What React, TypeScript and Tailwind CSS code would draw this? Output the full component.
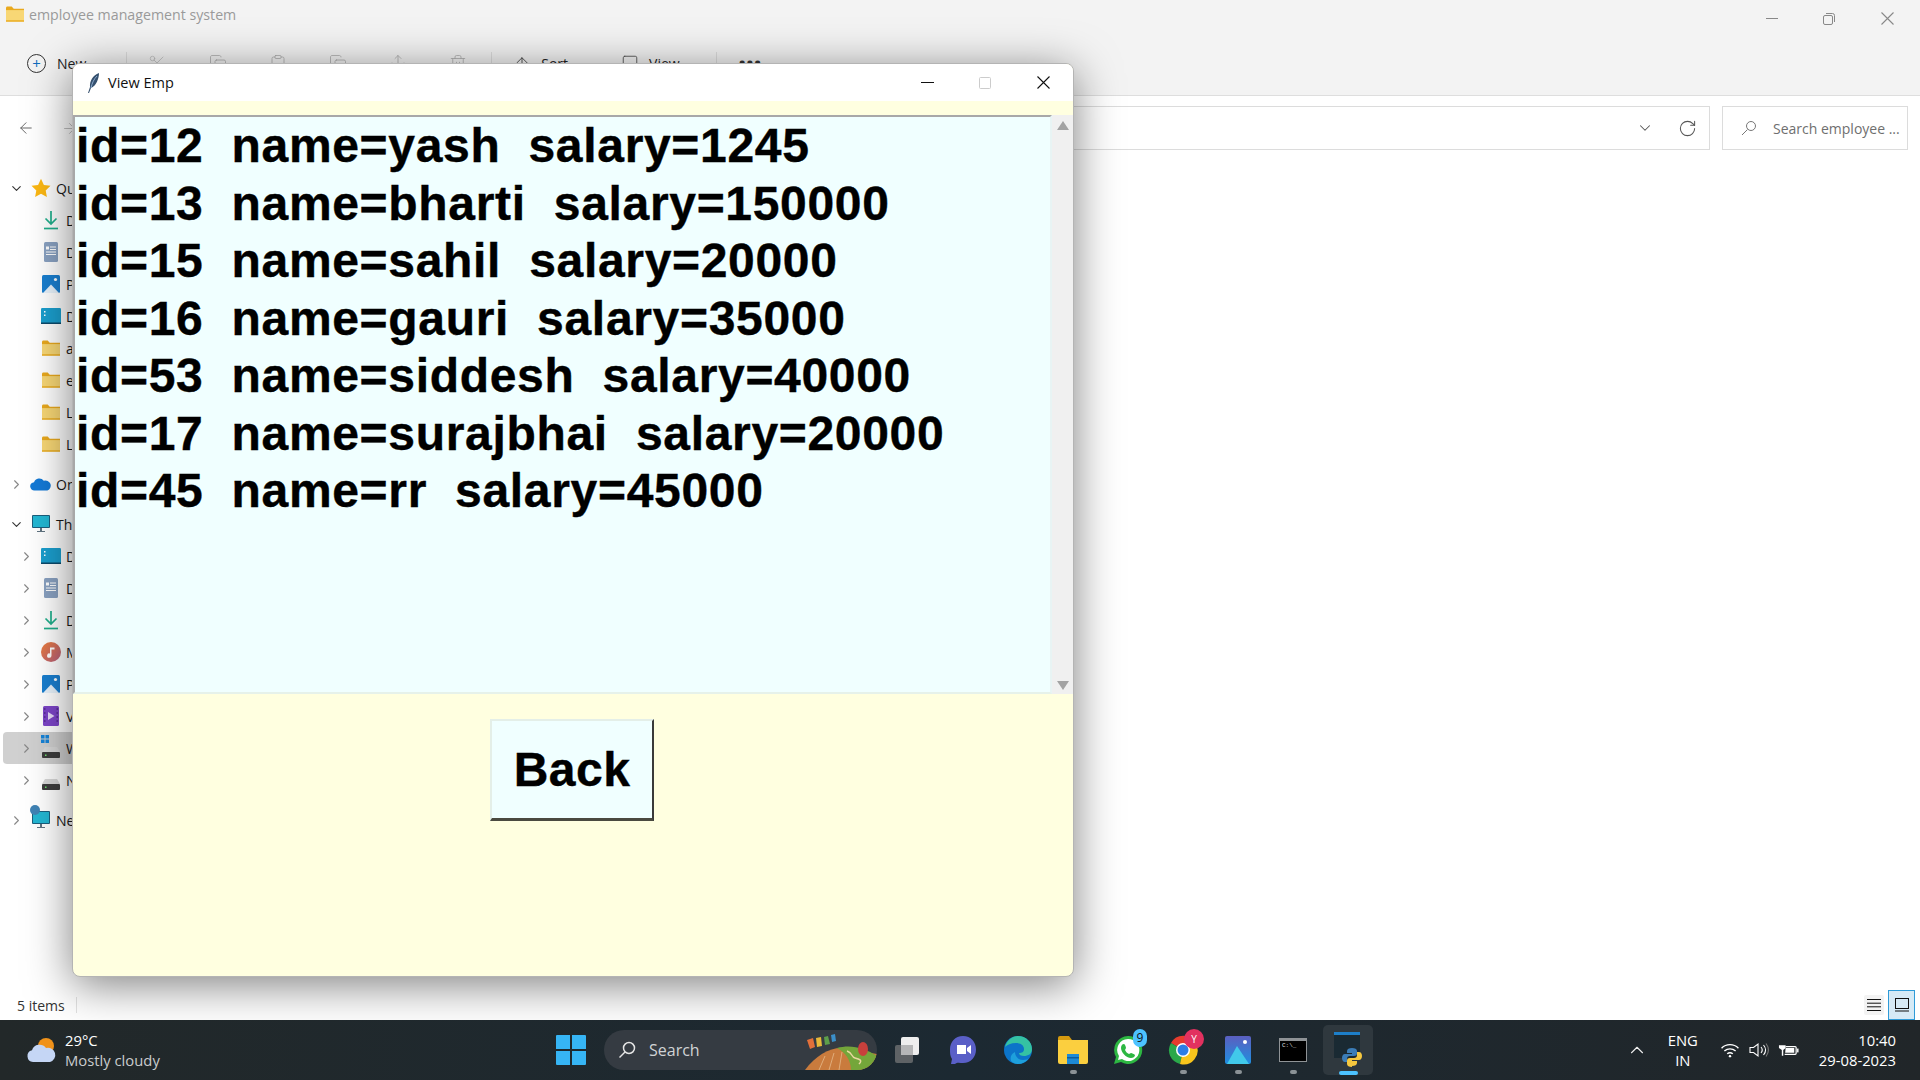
import {
  ArrowLeft,
  ArrowRight,
  ArrowUp,
  ChevronDown,
  ChevronRight,
  ChevronUp,
  Clipboard,
  Copy,
  RotateCw,
  Scissors,
  Share,
  Square,
  Trash2,
} from "lucide-react"
import type { ReactNode } from "react"

const segoe = "font-['Open_Sans','Noto_Sans',sans-serif]"

const employees = [
  "id=12  name=yash  salary=1245",
  "id=13  name=bharti  salary=150000",
  "id=15  name=sahil  salary=20000",
  "id=16  name=gauri  salary=35000",
  "id=53  name=siddesh  salary=40000",
  "id=17  name=surajbhai  salary=20000",
  "id=45  name=rr  salary=45000",
]

function CloseGlyph({ color }: { color: string }) {
  return (
    <svg viewBox="0 0 13 13" className="h-[13px] w-[13px] shrink-0" fill="none" stroke={color} strokeWidth="1.100">
      <path d="M.5.5l12 12M12.500.5l-12 12" />
    </svg>
  )
}

function FolderIcon({ className = "h-[16px] w-[18px]" }: { className?: string }) {
  return (
    <svg viewBox="0 0 18 15" className={className}>
      <path d="M0 1.500C0 .7.6 0 1.400 0h4.300l2 2.200H18V15H0z" fill="#e9a91e" />
      <path d="M0 3.600h18V15H0z" fill="#f8d775" />
      <path d="M0 13.800h18V15H0z" fill="#e9a91e" />
    </svg>
  )
}

function DownloadIcon() {
  return (
    <svg viewBox="0 0 16 20" className="h-[20px] w-[16px]">
      <path d="M8 1v13M2.500 8.500 8 14l5.500-5.500" fill="none" stroke="#1fae8b" strokeWidth="1.700" />
      <path d="M1 18.500h14" stroke="#1fae8b" strokeWidth="1.700" />
    </svg>
  )
}

function DocIcon() {
  return (
    <svg viewBox="0 0 14 20" className="h-[20px] w-[14px]">
      <rect width="14" height="20" rx="1.500" fill="#8aa2c2" />
      <path d="M6 5h6M6 7.500h6M2 10h10M2 12.500h10" stroke="#fff" strokeWidth="1.100" />
      <rect x="2" y="4.500" width="3" height="3" fill="#fff" />
    </svg>
  )
}

function PictureIcon() {
  return (
    <svg viewBox="0 0 18 18" className="h-[18px] w-[18px]">
      <rect width="18" height="18" rx="1.500" fill="#1a7fd0" />
      <path d="M1 18 9 9.500 17 18z" fill="#e8f3fc" />
      <circle cx="13.500" cy="4.500" r="1.600" fill="#fff" />
    </svg>
  )
}

function DesktopIcon() {
  return (
    <svg viewBox="0 0 20 16" className="h-[16px] w-[20px]">
      <rect width="20" height="16" rx="1.200" fill="#1b9fce" />
      <rect y="14.500" width="20" height="1.500" fill="#0d4a6b" />
      <path d="M3 3h1.500v1.500H3zM3 6.500h1.500V8H3z" fill="#fff" />
    </svg>
  )
}

function MusicIcon() {
  return (
    <svg viewBox="0 0 20 20" className="h-[20px] w-[20px]">
      <defs>
        <linearGradient id="music" x1="0" y1="0" x2="1" y2="1">
          <stop offset="0" stopColor="#ed7d3a" />
          <stop offset="1" stopColor="#b7607f" />
        </linearGradient>
      </defs>
      <circle cx="10" cy="10" r="10" fill="url(#music)" />
      <path d="M9 5.500h4.500v2H10.500v6a2.200 2.200 0 1 1-1.500-2z" fill="#fff" />
    </svg>
  )
}

function VideoIcon() {
  return (
    <svg viewBox="0 0 16 20" className="h-[20px] w-[16px]">
      <rect width="16" height="20" rx="1.500" fill="#7d45c9" />
      <path d="M5 6v8l6.500-4z" fill="#e8dcfa" />
      <path d="M1 3h1.500M1 7h1.500M1 11h1.500M1 15h1.500M13.500 3H15M13.500 7H15M13.500 11H15M13.500 15H15" stroke="#3a1d6b" strokeWidth="1.200" />
    </svg>
  )
}

function DriveIcon({ windows = false }: { windows?: boolean }) {
  return (
    <span className="relative block h-[20px] w-[18px]">
      <svg viewBox="0 0 18 11" className="absolute bottom-0 left-0 h-[11px] w-[18px]">
        <path d="M3 0h12l3 5H0z" fill="#d8d8d8" />
        <rect y="5" width="18" height="6" rx="1" fill="#3d3d3d" />
        <rect x="3" y="7.500" width="1.500" height="1.500" fill="#6fe06f" />
      </svg>
      {windows && (
        <svg viewBox="0 0 9 9" className="absolute -top-[3px] -left-[1px] h-[8px] w-[8px]">
          <path d="M0 0h4v4H0zM5 0h4v4H5zM0 5h4v4H0zM5 5h4v4H5z" fill="#1683d8" />
        </svg>
      )}
    </span>
  )
}

function MonitorIcon({ globe = false }: { globe?: boolean }) {
  return (
    <span className="relative block h-[18px] w-[18px]">
      <svg viewBox="0 0 18 18" className="h-[18px] w-[18px]">
        <rect width="18" height="13" rx="1" fill="#1b5f7d" />
        <rect x="1" y="1" width="16" height="11" fill="#23b7d3" />
        <path d="M8 13h2v3H8zM5 16h8v1H5z" fill="#5f7380" />
      </svg>
      {globe && <span className="absolute -top-[6px] -left-[2px] h-[10px] w-[10px] rounded-full bg-[#3f83b5]" />}
    </span>
  )
}

function StarIcon() {
  return (
    <svg viewBox="0 0 20 20" className="h-[20px] w-[20px]">
      <path d="m10 .8 2.900 6.100 6.600.9-4.800 4.600 1.200 6.600L10 15.800l-5.900 3.200 1.200-6.600L.5 7.800l6.600-.9z" fill="#fcb813" />
    </svg>
  )
}

function CloudIcon() {
  return (
    <svg viewBox="0 0 24 14" className="h-[14px] w-[22px]">
      <path d="M5 14a4.500 4.500 0 0 1-.6-9A6 6 0 0 1 15 3.500 5.300 5.300 0 1 1 19 14z" fill="#1379d6" />
    </svg>
  )
}

function NavRow({
  indent,
  open,
  selected,
  icon,
  label,
  gapTop = "",
}: {
  indent: "top" | "child" | "leaf"
  open?: boolean
  selected?: boolean
  icon: ReactNode
  label: string
  gapTop?: string
}) {
  const chevronLeft = indent === "top" ? "ml-[10px]" : "ml-[20px]"
  return (
    <div
      className={`flex h-[32px] items-center whitespace-nowrap text-[14px] text-[#1a1a1a] ${gapTop} ${
        selected ? "ml-[3px] rounded-l-[4px] bg-[#d0d0d0]" : ""
      }`}
    >
      <span className={`flex w-[12px] shrink-0 justify-center ${selected ? "ml-[17px]" : chevronLeft}`}>
        {indent !== "leaf" &&
          (open ? (
            <ChevronDown size={15} strokeWidth={1.800} className="shrink-0 text-[#333]" />
          ) : (
            <ChevronRight size={15} strokeWidth={1.800} className="shrink-0 text-[#888]" />
          ))}
      </span>
      <span className="ml-[8px] flex w-[22px] shrink-0 justify-center">{icon}</span>
      <span className="ml-[4px] shrink-0">{label}</span>
    </div>
  )
}

function TaskIcon({ children, dot, active }: { children: ReactNode; dot?: boolean; active?: boolean }) {
  return (
    <div
      className={`relative flex h-[50px] w-[50px] items-center justify-center rounded-[5px] ${
        active ? "bg-[#2f383e]" : ""
      }`}
    >
      {children}
      {dot && <span className="absolute bottom-[1px] h-[4px] w-[7px] rounded-full bg-[#8b9296]" />}
      {active && <span className="absolute bottom-0 h-[4px] w-[19px] rounded-full bg-[#4cc2ff]" />}
    </div>
  )
}

function Explorer() {
  return (
    <div className={`flex min-h-0 flex-1 flex-col bg-white ${segoe}`}>
      {/* Title bar */}
      <div className="flex h-[48px] items-start bg-[#f3f3f3]">
        <span className="mt-[6px] ml-[6px]">
          <FolderIcon />
        </span>
        <span className="mt-[4px] ml-[5px] text-[14.200px] text-[#9a9a9a]">employee management system</span>
        <div className="mt-[12px] ml-auto flex items-center">
          <span className="h-px w-[12px] bg-[#888]" />
          <svg viewBox="0 0 12 12" className="ml-[45px] h-[12px] w-[12px]" fill="none" stroke="#888">
            <rect x=".5" y="2.500" width="9" height="9" rx="1.500" />
            <path d="M3 .5h6.500a2 2 0 0 1 2 2V9" />
          </svg>
          <span className="mr-[26px] ml-[46px]">
            <CloseGlyph color="#888" />
          </span>
        </div>
      </div>

      {/* Command bar */}
      <div className="flex h-[48px] items-start border-b border-[#dedede] bg-[#f3f3f3] text-[#777]">
        <div className="mt-[6px] ml-[27px] flex h-[19px] w-[19px] items-center justify-center rounded-full border border-[#333] text-[15px] leading-none text-[#0f6cbd]">
          +
        </div>
        <span className="mt-[5px] ml-[11px] text-[14px] text-[#222]">New</span>
        <ChevronDown size={10} className="mt-[12px] ml-[6px]" />
        <span className="mt-[4px] ml-[24px] h-[28px] w-px bg-[#ddd]" />
        <Scissors size={18} strokeWidth={1} className="mt-[6px] ml-[21px] text-[#bbb]" />
        <Copy size={18} strokeWidth={1} className="mt-[6px] ml-[43px] text-[#aaa]" />
        <Clipboard size={18} strokeWidth={1} className="mt-[6px] ml-[42px] text-[#aaa]" />
        <Copy size={18} strokeWidth={1} className="mt-[6px] ml-[42px] text-[#aaa]" />
        <Share size={18} strokeWidth={1} className="mt-[6px] ml-[42px] text-[#aaa]" />
        <Trash2 size={18} strokeWidth={1} className="mt-[6px] ml-[42px] text-[#aaa]" />
        <span className="mt-[4px] ml-[24px] h-[28px] w-px bg-[#ddd]" />
        <ArrowUp size={18} strokeWidth={1.200} className="mt-[6px] ml-[21px] text-[#444]" />
        <span className="mt-[5px] ml-[10px] text-[14px] text-[#222]">Sort</span>
        <ChevronDown size={10} className="mt-[12px] ml-[6px]" />
        <Square size={18} strokeWidth={1.200} className="mt-[6px] ml-[37px] text-[#555]" />
        <span className="mt-[5px] ml-[10px] text-[14px] text-[#222]">View</span>
        <ChevronDown size={10} className="mt-[12px] ml-[6px]" />
        <span className="mt-[4px] ml-[20px] h-[28px] w-px bg-[#ddd]" />
        <span className="mt-[2px] ml-[22px] text-[18px] font-bold tracking-[1px] text-[#333]">•••</span>
      </div>

      {/* Address row */}
      <div className="flex h-[64px] items-center">
        <ArrowLeft size={18} strokeWidth={1.300} className="ml-[17px] shrink-0 text-[#666]" />
        <ArrowRight size={17} strokeWidth={1.300} className="ml-[26px] shrink-0 text-[#bbb]" />
        <div className="ml-[30px] flex h-[44px] flex-1 items-center justify-end border border-[#dcdcdc] pr-[12px] text-[#555]">
          <ChevronDown size={18} strokeWidth={1.400} />
          <RotateCw size={19} strokeWidth={1.300} className="ml-[24px]" />
        </div>
        <div className="mr-[12px] ml-[12px] flex h-[44px] w-[186px] items-center border border-[#dcdcdc] text-[14px] text-[#6f6f6f]">
          <svg viewBox="0 0 16 16" className="ml-[18px] h-[16px] w-[16px]" fill="none" stroke="#777">
            <circle cx="10" cy="6" r="4.500" />
            <path d="M6.500 9.500 1 15" />
          </svg>
          <span className="ml-[16px] whitespace-nowrap">Search employee ...</span>
        </div>
      </div>

      {/* Navigation pane */}
      <div className="min-h-0 flex-1 pt-[12px]">
        <div className="w-[73px] overflow-hidden">
          <NavRow indent="top" open icon={<StarIcon />} label="Quick access" />
          <NavRow indent="leaf" icon={<DownloadIcon />} label="Downloads" />
          <NavRow indent="leaf" icon={<DocIcon />} label="Documents" />
          <NavRow indent="leaf" icon={<PictureIcon />} label="Pictures" />
          <NavRow indent="leaf" icon={<DesktopIcon />} label="Desktop" />
          <NavRow indent="leaf" icon={<FolderIcon />} label="assignments" />
          <NavRow indent="leaf" icon={<FolderIcon />} label="employee" />
          <NavRow indent="leaf" icon={<FolderIcon />} label="Lab" />
          <NavRow indent="leaf" icon={<FolderIcon />} label="Lectures" />
          <NavRow indent="top" gapTop="mt-[8px]" icon={<CloudIcon />} label="OneDrive" />
          <NavRow indent="top" gapTop="mt-[8px]" open icon={<MonitorIcon />} label="This PC" />
          <NavRow indent="child" icon={<DesktopIcon />} label="Desktop" />
          <NavRow indent="child" icon={<DocIcon />} label="Documents" />
          <NavRow indent="child" icon={<DownloadIcon />} label="Downloads" />
          <NavRow indent="child" icon={<MusicIcon />} label="Music" />
          <NavRow indent="child" icon={<PictureIcon />} label="Pictures" />
          <NavRow indent="child" icon={<VideoIcon />} label="Videos" />
          <NavRow indent="child" selected icon={<DriveIcon windows />} label="Windows (C:)" />
          <NavRow indent="child" icon={<DriveIcon />} label="New Volume (D:)" />
          <NavRow indent="top" gapTop="mt-[8px]" icon={<MonitorIcon globe />} label="Network" />
        </div>
      </div>

      {/* Status bar */}
      <div className="flex h-[30px] items-center text-[14px] text-[#333]">
        <span className="ml-[17px]">5 items</span>
        <span className="ml-[11px] h-[16px] w-px bg-[#e2e2e2]" />
        <div className="mr-[5px] ml-auto flex items-center">
          <span className="mr-[4px] flex h-[20px] w-[20px] items-center justify-center rounded-[2px] bg-[#f3f3f3]">
            <svg viewBox="0 0 14 14" className="h-[14px] w-[14px]" stroke="#111">
              <path d="M0 1.500h14M0 5.200h14M0 8.800h14M0 12.500h14" />
            </svg>
          </span>
          <span className="flex h-[30px] w-[27px] items-center justify-center border border-[#2f9bd8] bg-[#d6eaf6]">
            <svg viewBox="0 0 14 14" className="h-[14px] w-[14px]" fill="none" stroke="#111">
              <rect x=".5" y=".5" width="13" height="10" />
              <path d="M0 13h14" />
            </svg>
          </span>
        </div>
      </div>
    </div>
  )
}

function ViewEmpWindow() {
  return (
    <div className="absolute top-[63px] left-[72px] z-10 flex h-[914px] w-[1002px] flex-col overflow-hidden rounded-[8px] border border-[#b4b4b4] bg-[#ffffe0] shadow-[0_8px_45px_rgba(0,0,0,0.5)]">
      <div className={`flex h-[37px] shrink-0 items-center bg-white ${segoe}`}>
        <svg viewBox="0 0 12 20" className="ml-[15px] h-[20px] w-[12px]">
          <path d="M11 0C5 2 1.500 8 2 14l-2 6 1 0 2-5c5-2 8-9 8-15z" fill="#35506e" />
          <path d="M9 3C6 6 4 10 3 15" stroke="#9fc0e6" strokeWidth=".8" fill="none" />
        </svg>
        <span className="ml-[8px] text-[14.500px] text-[#111]">View Emp</span>
        <div className="ml-auto flex items-center">
          <span className="h-[1.500px] w-[13px] bg-[#111]" />
          <span className="ml-[45px] h-[12px] w-[12px] rounded-[1.500px] border border-[#ccc]" />
          <span className="mr-[23px] ml-[46px]">
            <CloseGlyph color="#111" />
          </span>
        </div>
      </div>
      <div className="h-[14px] shrink-0" />
      <div className="flex h-[579px] shrink-0 bg-[#f0f0f0]">
        <div className="w-[979px] border-2 border-t-[#a8a8a8] border-r-[#e8f4f4] border-b-[#e6f2ea] border-l-[#a8a8a8] bg-[#f0ffff] pl-[1px] font-['Liberation_Sans',Arial,sans-serif] text-[48px] leading-[57.500px] font-bold tracking-[0.68px] text-black [-webkit-text-stroke:0.4px_black]">
          {employees.map((row) => (
            <div key={row} className="whitespace-pre">
              {row}
            </div>
          ))}
        </div>
        <div className="flex flex-1 flex-col items-center justify-between pt-[6px] pb-[4px]">
          <span className="h-0 w-0 border-x-[6px] border-b-[9px] border-x-transparent border-b-[#a3a3a3]" />
          <span className="h-0 w-0 border-x-[6px] border-t-[9px] border-x-transparent border-t-[#a3a3a3]" />
        </div>
      </div>
      <div className="flex justify-center pt-[25px] pr-[2px]">
        <button
          type="button"
          className="h-[102px] w-[164px] border-t-2 border-r-2 border-b-[3px] border-l-2 border-t-[#e4efe8] border-r-[#3a3a3a] border-b-[#4a4a40] border-l-[#e4efe8] bg-[#f0ffff] font-['Liberation_Sans',Arial,sans-serif] text-[48px] font-bold tracking-[0.5px] text-black [-webkit-text-stroke:0.4px_black]"
        >
          Back
        </button>
      </div>
    </div>
  )
}

function Taskbar() {
  return (
    <div
      className={`relative z-20 flex h-[60px] shrink-0 items-center bg-gradient-to-r from-[#222829] via-[#1c2932] to-[#212629] text-white ${segoe}`}
    >
      {/* Weather */}
      <div className="flex w-[556px] shrink-0 items-center">
        <svg viewBox="0 0 32 26" className="ml-[25px] h-[26px] w-[32px]">
          <circle cx="21" cy="9" r="8" fill="#f0921a" />
          <path d="M8 25a6 6 0 0 1-1-11.800A8 8 0 0 1 21 11a6 6 0 0 1 4 14z" fill="#c5d6f5" />
        </svg>
        <div className="ml-[8px] text-[14.800px] leading-[20px]">
          <div>29°C</div>
          <div className="text-[#c9cccd]">Mostly cloudy</div>
        </div>
      </div>

      {/* Start and search */}
      <svg viewBox="0 0 30 30" className="h-[30px] w-[30px] shrink-0">
        <path d="M0 1a1 1 0 0 1 1-1h13v14H0zM16 0h13a1 1 0 0 1 1 1v13H16zM0 16h14v14H1a1 1 0 0 1-1-1zM16 16h14v13a1 1 0 0 1-1 1H16z" fill="#36b5f5" />
      </svg>
      <div className="relative ml-[18px] flex h-[40px] w-[273px] shrink-0 items-center overflow-hidden rounded-full bg-[#353b42]">
        <svg viewBox="0 0 18 18" className="ml-[14px] h-[18px] w-[18px]" fill="none" stroke="#e5e5e5" strokeWidth="1.500">
          <circle cx="11" cy="7" r="5.500" />
          <path d="M7 11 1.500 16.500" />
        </svg>
        <span className="ml-[13px] text-[16px] text-[#d0d3d5]">Search</span>
        <svg viewBox="0 0 72 40" className="absolute top-0 right-0 h-[40px] w-[72px]">
          <path d="M0 40C10 26 24 18 36 18L72 24V40z" fill="#c97b3d" />
          <path d="M32 18C46 14 60 18 72 26V40H46C46 30 40 22 32 18z" fill="#74a63a" />
          <path d="M42 21c6 2 4 6 8 7s8 2 4 6" fill="none" stroke="#e8d8a0" strokeWidth="1.500" />
          <path d="M14 40l6-14M24 40l5-17M34 40l3-18" stroke="#e6b98a" strokeWidth=".8" />
          <ellipse cx="58" cy="19" rx="5" ry="7" fill="#c8403c" />
          <path d="M2 10 8 8l2 9-5 2z" fill="#e2703a" />
          <path d="M11 8l5-1 1 9-5 1z" fill="#e8b93a" />
          <path d="M19 7l4-1 2 8-5 1z" fill="#5d9e4a" />
          <path d="M26 5l4-1 1 7-4 1z" fill="#3b8fc9" />
        </svg>
      </div>

      {/* Pinned apps */}
      <div className="ml-[6px] flex gap-[5px]">
        <TaskIcon>
          <span className="relative block h-[26px] w-[26px]">
            <span className="absolute top-[8px] left-0 h-[18px] w-[18px] rounded-[2px] bg-[#5e6265]" />
            <span className="absolute top-0 left-[6px] h-[18px] w-[18px] rounded-[2px] bg-[#eeeeee]" />
            <span className="absolute top-[8px] left-[6px] h-[10px] w-[12px] bg-[#b5b6b7]" />
          </span>
        </TaskIcon>
        <TaskIcon>
          <svg viewBox="0 0 28 30" className="h-[30px] w-[28px]">
            <path d="M14 1c8 0 13 6 13 13.500S22 28 14 28c-3 0-6-1-8 1H2l1-5C1 21 1 18 1 14.500 1 7 6 1 14 1z" fill="#5a5fc7" />
            <path d="M8 10h9v9H8zM18 13l4-3v9l-4-3z" fill="#fff" />
          </svg>
        </TaskIcon>
        <TaskIcon>
          <svg viewBox="0 0 30 30" className="h-[30px] w-[30px]">
            <circle cx="15" cy="15" r="14" fill="#0c74c9" />
            <path d="M2 12C4 5 9 1 15 1c8 0 14 6 14 13 0 5-4 7-8 7-3 0-5-1-5-3 3 0 5-1 5-4 0-4-4-6-8-6-5 0-9 2-11 4z" fill="#35c2a3" />
            <path d="M12 17c0 4 3 8 8 8 3 0 5-1 6-2-3 4-7 6-11 6-3 0-5-1-7-3-1-4 0-7 4-9z" fill="#1ea0dc" />
          </svg>
        </TaskIcon>
        <TaskIcon dot>
          <svg viewBox="0 0 30 28" className="h-[28px] w-[30px]">
            <path d="M0 2a2 2 0 0 1 2-2h9l3 4H0z" fill="#d59a0f" />
            <path d="M0 4h30v22a2 2 0 0 1-2 2H2a2 2 0 0 1-2-2z" fill="#fbcf3f" />
            <path d="M9 18h12v10H9z" fill="#1d8ad6" />
            <path d="M9 21h12v1.500H9z" fill="#0f5c9a" />
          </svg>
        </TaskIcon>
        <TaskIcon>
          <span className="relative block h-[30px] w-[30px]">
            <svg viewBox="0 0 30 30" className="h-[30px] w-[30px]">
              <path d="M15 1a14 14 0 0 0-12 21L1 29l7-2A14 14 0 1 0 15 1z" fill="#2db742" />
              <path d="M15 4a11 11 0 0 0-9 17l-1 4 4-1A11 11 0 1 0 15 4z" fill="#fff" />
              <path d="M11 9c1 0 2 3 2 4l-1 2c1 2 2 3 4 4l2-1c1 0 3 1 4 2 0 2-2 3-4 3-5 0-10-6-10-10 0-2 1-4 3-4z" fill="#2db742" />
            </svg>
            <span className="absolute -top-[6px] -right-[4px] flex h-[18px] w-[14px] items-center justify-center rounded-full bg-[#4cc2ff] text-[12px] text-[#111]">
              9
            </span>
          </span>
        </TaskIcon>
        <TaskIcon dot>
          <span className="relative block h-[30px] w-[30px]">
            <svg viewBox="0 0 30 30" className="h-[30px] w-[30px]">
              <path d="M15 15 3 8A14 14 0 0 1 28 9z" fill="#e53c2e" />
              <path d="M15 15 3 8a14 14 0 0 0 9 21z" fill="#2aa84a" />
              <path d="M15 15 28 9a14 14 0 0 1-16 20z" fill="#f8c51c" />
              <circle cx="15" cy="15" r="7" fill="#fff" />
              <circle cx="15" cy="15" r="5.500" fill="#2c7de6" />
            </svg>
            <span className="absolute -top-[6px] -right-[6px] flex h-[20px] w-[20px] items-center justify-center rounded-full bg-[#e2315f] text-[10px] text-white">
              Y
            </span>
          </span>
        </TaskIcon>
        <TaskIcon dot>
          <svg viewBox="0 0 26 28" className="h-[28px] w-[26px]">
            <defs>
              <linearGradient id="photos" x1="0" y1="0" x2="0" y2="1">
                <stop offset="0" stopColor="#5b5fc0" />
                <stop offset="1" stopColor="#1f8fe0" />
              </linearGradient>
            </defs>
            <rect width="26" height="28" rx="2" fill="url(#photos)" />
            <path d="M2 28 12 10l12 18z" fill="#41c9ea" />
            <circle cx="20" cy="6" r="2" fill="#fff" />
          </svg>
        </TaskIcon>
        <TaskIcon dot>
          <span className="block h-[24px] w-[28px] border-x border-t-[3px] border-b border-[#8f9396] bg-black pl-[2px] font-['Liberation_Mono',monospace] text-[6px] leading-[10px] text-[#ddd]">
            C:\_
          </span>
        </TaskIcon>
        <TaskIcon active>
          <span className="relative block h-[36px] w-[28px]">
            <span className="absolute top-0 left-0 h-[26px] w-[26px] border-t-[3px] border-[#1d7fc9] bg-[#1a2a33]" />
            <svg viewBox="0 0 20 20" className="absolute right-0 bottom-0 h-[22px] w-[20px]">
              <path d="M10 1c-3 0-5 1-5 3v2h5v1H3C1 7 0 9 0 11s1 4 3 4h2v-3c0-2 1-3 3-3h4c2 0 3-1 3-3V4c0-2-2-3-5-3z" fill="#3b7db8" />
              <path d="M10 19c3 0 5-1 5-3v-2h-5v-1h7c2 0 3-2 3-4s-1-4-3-4h-2v3c0 2-1 3-3 3H8c-2 0-3 1-3 3v3c0 2 2 3 5 3z" fill="#f6c83f" />
            </svg>
          </span>
        </TaskIcon>
      </div>

      {/* System tray */}
      <div className="ml-auto flex items-center pr-[24px]">
        <ChevronUp size={22} strokeWidth={1.200} className="text-[#eee]" />
        <div className="ml-[17px] w-[36px] text-center text-[14.800px] leading-[20px]">
          <div>ENG</div>
          <div>IN</div>
        </div>
        <svg viewBox="0 0 20 16" className="ml-[19px] h-[15px] w-[20px]" fill="none" stroke="#fff" strokeWidth="1.500">
          <path d="M1 5.500c5-5 13-5 18 0M4 8.500c3.500-3 8.500-3 12 0M7 11.500c2-1.500 4-1.500 6 0" />
          <circle cx="10" cy="14" r="1.300" fill="#fff" stroke="none" />
        </svg>
        <svg viewBox="0 0 22 16" className="ml-[9px] h-[16px] w-[22px]" fill="none" stroke="#fff" strokeWidth="1.100">
          <path d="M1 5.500h3.500L9 2v12L4.500 10.500H1z" />
          <path d="M12 5c1.500 1.800 1.500 4.200 0 6M14.500 3c2.500 3 2.500 7 0 10" />
          <path d="M17 1.500c3 4 3 9 0 13" stroke="#777" />
        </svg>
        <svg viewBox="0 0 22 16" className="ml-[7px] h-[16px] w-[21px]">
          <path d="M3 0v3M6 0v3M1 3h7v3L5.500 8v6H4V8L1 6z" fill="#fff" />
          <path d="M8 4.500h10a1 1 0 0 1 1 1v6a1 1 0 0 1-1 1H7" fill="none" stroke="#fff" strokeWidth="1.300" />
          <path d="M8 6h9v5H7.500z" fill="#fff" />
          <rect x="20" y="6.500" width="1.500" height="4" fill="#fff" />
        </svg>
        <div className="ml-[20px] text-right text-[14.800px] leading-[20px]">
          <div>10:40</div>
          <div>29-08-2023</div>
        </div>
      </div>
    </div>
  )
}

export default function App() {
  return (
    <div className="relative flex h-screen w-full flex-col overflow-hidden">
      <Explorer />
      <ViewEmpWindow />
      <Taskbar />
    </div>
  )
}
